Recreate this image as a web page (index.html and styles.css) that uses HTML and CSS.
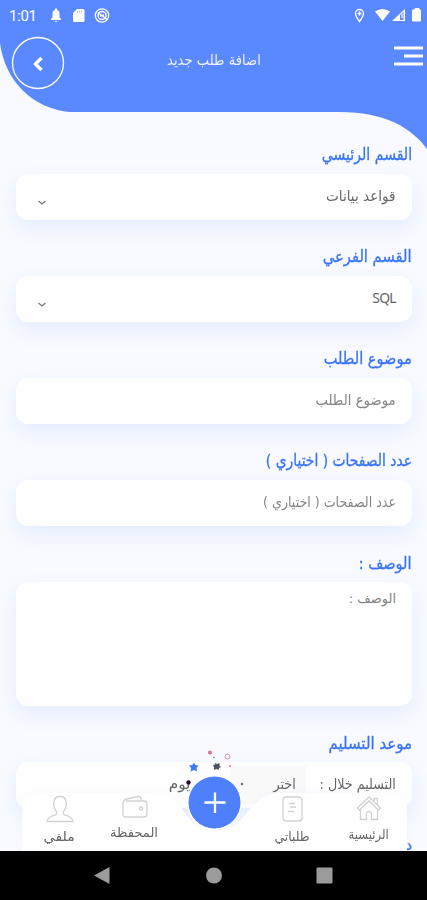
FILE: index.html
```
<!DOCTYPE html>
<html lang="ar" dir="rtl">
<head>
<meta charset="utf-8">
<title>اضافة طلب جديد</title>
<link rel="stylesheet" href="styles.css">
</head>
<body>
<div class="phone">
  <header class="header">
    <svg class="header-shape" viewBox="0 0 427 152" aria-hidden="true"><path d="M0 0H427V149C411 127 384 112 340 112H70C34 109 5 82 0 43Z" fill="#5a88ff"/></svg>
    <div class="status" dir="ltr">
      <span class="clock">1:01</span>
      <svg class="status-left" width="62" height="18" viewBox="0 0 62 18" aria-hidden="true">
        <path d="M1 13V12L2.500 10.500V7Q2.500 3.500 5 2.800V1.500H7V2.800Q9.500 3.500 9.500 7V10.500L11 12V13ZM4.500 14H7.500Q6 16 4.500 14Z" fill="#fff"/>
        <path d="M27 2H33Q34.500 2 34.500 3.500V13.500Q34.500 15 33 15H24.500Q23 15 23 13.500V6Z" fill="#fff"/>
        <path d="M27.500 4V6M29.500 3.500V5.500M31.500 3.500V5.500" stroke="#a9c0ff" stroke-width="1"/>
        <circle cx="52" cy="8.500" r="6.700" fill="none" stroke="#fff" stroke-width="1.300"/>
        <circle cx="52" cy="8.500" r="4" fill="none" stroke="#fff" stroke-width="1.500"/>
        <path d="M48 5.500L57 12.500M50 9L54 8" stroke="#fff" stroke-width="1.500"/>
      </svg>
      <svg class="status-right" width="68" height="18" viewBox="0 0 68 18" aria-hidden="true">
        <path d="M5.500 14.500C3 11 1.500 9 1.500 6.500A4 4 0 0 1 9.500 6.500C9.500 9 8 11 5.500 14.500Z" fill="none" stroke="#fff" stroke-width="1.400"/>
        <path d="M5.500 4.200V8.800M3.500 6.500H7.500" stroke="#fff" stroke-width="1.300"/>
        <path d="M21 4.500Q28.500 -.5 36 4.500L28.500 14Z" fill="#fff"/>
        <path d="M38 14L51 2V14Z" fill="#fff"/><path d="M46 13V8L49.500 5V13Z" fill="#5a88ff"/><path d="M48 7V11" stroke="#fff" stroke-width="1.200"/>
        <path d="M59.500 3H61V1.500H65V3H66.500V14H58.500V3Z" fill="#fff" stroke="#fff" stroke-linejoin="round"/>
      </svg>
    </div>
    <div class="topbar">
      <svg class="menu" width="30" height="22" viewBox="0 0 30 22" aria-hidden="true"><path d="M0 3H29M10 11H29M0 19H29" stroke="#fff" stroke-width="3"/></svg>
      <h1 class="title"><span class="t t-title">اضافة طلب جديد</span></h1>
      <svg class="back" width="54" height="54" viewBox="0 0 54 54" aria-hidden="true"><circle cx="27" cy="27" r="25.500" fill="none" stroke="#fff" stroke-width="1.300"/><path d="M30.500 22L24.500 28L30.500 34" fill="none" stroke="#fff" stroke-width="3.400"/></svg>
    </div>
  </header>

  <main class="form">
    <section class="field">
      <h2 class="label"><span class="t l1">القسم الرئيسي</span></h2>
      <div class="control"><span class="t v1">قواعد بيانات</span><svg class="chevron" width="10" height="6" viewBox="0 0 10 6"><path d="M1.500 1L5 4L8.500 1" fill="none" stroke="#777" stroke-width="1.300"/></svg></div>
    </section>
    <section class="field">
      <h2 class="label"><span class="t l2">القسم الفرعي</span></h2>
      <div class="control"><span class="latin">SQL</span><svg class="chevron" width="10" height="6" viewBox="0 0 10 6"><path d="M1.500 1L5 4L8.500 1" fill="none" stroke="#777" stroke-width="1.300"/></svg></div>
    </section>
    <section class="field">
      <h2 class="label"><span class="t l3">موضوع الطلب</span></h2>
      <div class="control hint"><span class="t v3">موضوع الطلب</span></div>
    </section>
    <section class="field">
      <h2 class="label"><span class="t l4">عدد الصفحات ( اختياري )</span></h2>
      <div class="control hint"><span class="t v4">عدد الصفحات ( اختياري )</span></div>
    </section>
    <section class="field">
      <h2 class="label"><span class="t l5">الوصف :</span></h2>
      <div class="control hint area"><span class="t">الوصف :</span></div>
    </section>
    <section class="field">
      <h2 class="label"><span class="t l6">موعد التسليم</span></h2>
      <div class="control due"><span class="t v6">التسليم خلال :</span><span class="pick"><span class="t v7">اختر</span></span><span class="t v8">يوم</span></div>
    </section>
    <section class="field">
      <h2 class="label"><span class="t l7">د</span></h2>
    </section>
  </main>

  <nav class="tabs">
    <svg class="tabs-shape" viewBox="0 0 385 58" aria-hidden="true"><path d="M0 58V16Q0 0 16 0H136C152 0 157 13 166 24C178 41 208 41 220 26C233 10 240 0 260 0H369Q385 0 385 16V58Z" fill="#fefefe"/></svg>
    <div class="tab home">
      <svg width="26" height="26" viewBox="0 0 26 26"><path d="M1.500 13L13 2L24.500 13L22.500 15L13 6L3.500 15ZM4.500 14.500V24.500H10.500V18Q13 15 15.500 18V24.500H21.500V14.500M18 6V3.500H21.500V9.500"/></svg>
      <span class="t n1">الرئيسية</span>
    </div>
    <div class="tab orders">
      <svg width="26" height="28" viewBox="0 0 26 28"><path d="M6 2H19L22 4V23Q22 26 19 26H6Q3 26 3 23V5Q3 2 6 2ZM9 8.500H15M10 12H16M8 16.500H14"/></svg>
      <span class="t n2">طلباتي</span>
    </div>
    <div class="tab wallet">
      <svg width="28" height="24" viewBox="0 0 28 24"><path d="M5 6H23Q26 6 26 9V19Q26 22 23 22H5Q2 22 2 19V8Q2 5 6 4L17 1.500Q20 1 20.500 5.500"/><circle cx="20" cy="13.500" r="1.500"/></svg>
      <span class="t n3">المحفظة</span>
    </div>
    <div class="tab profile">
      <svg width="30" height="28" viewBox="0 0 30 28"><path d="M10.500 15C8.500 12 8.500 9 9 6Q10 1.500 15 1.500Q20 1.500 21 6C21.500 9 21.500 12 19.500 15Q18 16.500 18.500 19Q19 20 23 21Q27 22.500 28 26.500H2Q3 22.500 7 21Q11 20 11.500 19Q12 16.500 10.500 15Z"/></svg>
      <span class="t n4">ملفي</span>
    </div>
    <svg class="add" width="80" height="84" viewBox="0 0 80 84" aria-hidden="true">
      <circle cx="40.500" cy="54.500" r="27.500" fill="#fff"/><circle cx="40.500" cy="54.500" r="26" fill="#4f80fb"/>
      <path d="M30.500 54.500H51.500M41 44.500V65" stroke="#fff" stroke-width="2.300"/>
      <path d="M20 14.500L21.500 17L24.500 17.500L22.500 20L23 23.500L20 22L16.500 23.500L17 20L15 17.500L18.500 17Z" fill="#3d7cf5"/>
      <path d="M41 15L43 16L45.500 15L45.500 17.500L47 19L45 20L44.500 22L42.500 21L40 22V19.500L39 17.500L40.500 17Z" fill="#4e555f"/>
      <circle cx="36" cy="4.500" r="2" fill="#d9738c"/><circle cx="53.500" cy="8.500" r="2.500" fill="none" stroke="#dc99ae"/><circle cx="56" cy="18" r="1" fill="#e07094"/><circle cx="40" cy="9.500" r=".8" fill="#777"/><circle cx="14.500" cy="34.500" r="2.200" fill="#210c35"/><circle cx="68" cy="36" r="1.300" fill="#777"/>
    </svg>
  </nav>

  <footer class="system">
    <svg width="427" height="49" viewBox="0 0 427 49" aria-hidden="true"><path d="M94 24.500L109.500 16V33Z"/><circle cx="214" cy="24.500" r="8"/><rect x="316.500" y="16.500" width="16" height="16" rx="1"/></svg>
  </footer>
</div>
</body>
</html>
```
FILE: styles.css
```
* { box-sizing: border-box; }
body { margin: 0; font-family: "DejaVu Sans", "Noto Sans", sans-serif; }
.phone { position: relative; width: 427px; height: 900px; overflow: hidden; background: #f8faff; display: flex; flex-direction: column; }
.t { display: inline-block; white-space: nowrap; transform-origin: right center; }

.header { position: relative; height: 134px; flex: none; }
.header-shape { position: absolute; left: 0; top: 0; width: 427px; height: 152px; }
.status { position: relative; display: flex; align-items: center; height: 32px; padding: 0 5px 0 9px; }
.clock { font: 15px Roboto, sans-serif; color: #fff; width: 41px; letter-spacing: -.3px; }
.status-right { margin-left: auto; }
.topbar { position: relative; display: flex; align-items: center; justify-content: space-between; height: 60px; padding: 2px 3px 0 11px; }
.menu { margin-top: -14px; }
.title { margin: -4px 30px 0 0; color: #eef3ff; font-size: 13px; font-weight: 400; line-height: 20px; }
.t-title { transform: scale(1.01, 1.12); }

.form { height: 717px; overflow: hidden; padding: 0 15px 0 16px; }
.field { margin-bottom: 16px; }
.label { margin: 0; height: 40px; line-height: 42px; font-size: 15px; font-weight: 400; color: #3973f7; -webkit-text-stroke: .3px #3973f7; }
.l1 { transform: scale(.94, 1.1); }
.l2 { transform: scale(.98, 1.1); }
.l3 { transform: scale(.97, 1.1); }
.l4 { transform: scale(.925, 1.1); }
.l5 { transform: scale(.97, 1.1); }
.l6 { transform: scale(1, 1.1); }
.control { display: flex; align-items: center; justify-content: space-between; height: 46px; padding: 0 16px 0 20px; border-radius: 12px; background: #fefeff; box-shadow: 0 8px 20px rgba(80, 140, 255, .12); font-size: 13px; line-height: 26px; color: #666; }
.v1 { transform: scale(1.045, 1.12); }
.v3 { transform: scale(1.02, 1.12); }
.v4 { transform: scale(.97, 1.12); }
.v6 { transform: scale(.98, 1.1); }
.v7 { transform: scale(.98, 1.1); }
.hint { color: #858585; }
.area { height: 124px; align-items: flex-start; padding-top: 4px; }
.latin { font: 14px "Noto Sans", sans-serif; letter-spacing: -.7px; margin-top: -4px; }
.chevron { margin: 12px 0 0 1px; }
.due { justify-content: flex-start; }
.pick { width: 76px; height: 38px; margin-right: 12px; padding: 6px 10px 0 0; background: #f9f9fa; flex: none; }
.v8 { margin-right: 40px; transform: scale(1.18, 1.12); }

.tabs { position: absolute; left: 22px; top: 793px; width: 385px; height: 58px; display: grid; grid-template-columns: 77px 75px 83px 75px 75px; direction: rtl; }
.tabs-shape { position: absolute; left: 0; top: 0; width: 385px; height: 58px; filter: drop-shadow(0 0 4px rgba(100, 140, 220, .04)); }
.tab { position: relative; display: flex; flex-direction: column; align-items: center; padding-top: 2px; font-size: 12px; line-height: 20px; color: #666; }
.tab svg { fill: none; stroke: #d2d2d5; stroke-width: 1.300; flex: none; }
.tab .t { transform-origin: center; margin-top: 4px; }
.wallet { grid-column: 4; }
.tab .n1 { transform: scale(.97, 1.1); }
.tab .n2 { transform: scale(1.03, 1.1); }
.tab .n3 { transform: scale(1.09, 1.1); }
.tab .n4 { transform: scale(1.18, 1.1); }
.add { position: absolute; left: 152px; top: -45px; }
.system { height: 49px; background: #000; flex: none; }
.system svg { display: block; fill: #9b9b9b; }
```
